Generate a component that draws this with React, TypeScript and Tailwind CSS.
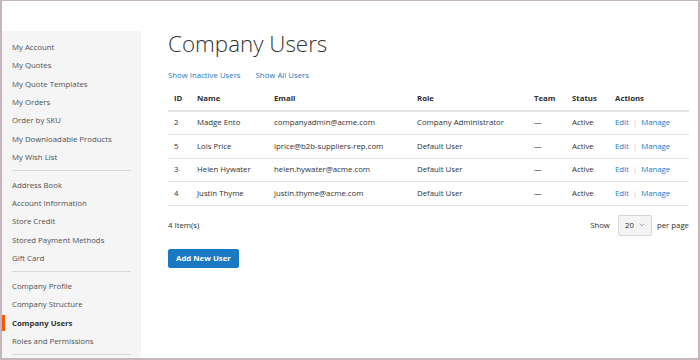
import { ChevronDown } from "lucide-react"

type User = {
    id: number
    name: string
    email: string
    role: string
}

const users: Array<User> = [
    { id: 2, name: "Madge Ento", email: "companyadmin@acme.com", role: "Company Administrator" },
    { id: 5, name: "Lois Price", email: "lprice@b2b-suppliers-rep.com", role: "Default User" },
    { id: 3, name: "Helen Hywater", email: "helen.hywater@acme.com", role: "Default User" },
    { id: 4, name: "Justin Thyme", email: "justin.thyme@acme.com", role: "Default User" },
]

const navGroups: Array<Array<string>> = [
    ["My Account", "My Quotes", "My Quote Templates", "My Orders", "Order by SKU", "My Downloadable Products", "My Wish List"],
    ["Address Book", "Account Information", "Store Credit", "Stored Payment Methods", "Gift Card"],
    ["Company Profile", "Company Structure", "Company Users", "Roles and Permissions"],
]

const Sidebar: React.FC = () => {
    return (
        <aside className="w-[139px] shrink-0 mt-[30px] bg-[#f5f5f5] pt-[7px]">
            {navGroups.map((group, gi) => (
                <div key={gi} className="border-b border-[#d6d6d6] mx-[10px] pb-[4px] mb-[4.5px]">
                    {group.map((item) => {
                        const active = item === "Company Users"
                        return (
                            <div key={item} className="relative h-[18.33px] leading-[18.33px] text-[7.8px] whitespace-nowrap">
                                {active && <span className="absolute -left-[10px] top-[1px] h-[16px] w-[3px] bg-[#ff5501]" />}
                                <span className={active ? "font-bold text-[#333333]" : "text-[#505050]"}>{item}</span>
                            </div>
                        )
                    })}
                </div>
            ))}
        </aside>
    )
}

const App: React.FC = () => {
    return (
        <div
            className="w-[700px] h-[360px] overflow-hidden bg-white border-t border-l-2 border-r-2 border-b-2 border-[#c4b6ba] text-[#303030]"
            style={{ fontFamily: '"Open Sans", "Liberation Sans", sans-serif' }}
        >
            <div className="flex">
                <Sidebar />
                <main className="flex-1 pl-[27px] pr-[9px]">
                    <h1 className="mt-[28px] text-[22.4px] font-light leading-[30px] text-[#333333]">Company Users</h1>
                    <div className="flex gap-[15px] mt-[9px] text-[7.8px] leading-[14px] text-[#1979c3]">
                        <span>Show Inactive Users</span>
                        <span>Show All Users</span>
                    </div>
                    <table className="w-full mt-[5px] text-[7.8px] border-collapse">
                        <thead>
                            <tr className="border-b-2 border-[#e4e4e4]">
                                <th className="w-[23px] text-left pl-[6px] h-[24px] font-bold">ID</th>
                                <th className="w-[77px] text-left pl-[6px] font-bold">Name</th>
                                <th className="w-[143px] text-left pl-[6px] font-bold">Email</th>
                                <th className="w-[117px] text-left pl-[6px] font-bold">Role</th>
                                <th className="w-[38px] text-left pl-[6px] font-bold">Team</th>
                                <th className="w-[43px] text-left pl-[6px] font-bold">Status</th>
                                <th className="text-left pl-[6px] font-bold">Actions</th>
                            </tr>
                        </thead>
                        <tbody>
                            {users.map((user) => (
                                <tr key={user.id} className="border-b border-[#e4e4e4] h-[23.6px]">
                                    <td className="pl-[6px]">{user.id}</td>
                                    <td className="pl-[6px] whitespace-nowrap">{user.name}</td>
                                    <td className="pl-[6px] whitespace-nowrap">{user.email}</td>
                                    <td className="pl-[6px] whitespace-nowrap">{user.role}</td>
                                    <td className="pl-[6px]">—</td>
                                    <td className="pl-[6px]">Active</td>
                                    <td className="pl-[6px] whitespace-nowrap text-[#1979c3]">
                                        Edit
                                        <span className="mx-[4px] text-[#c5c5c5]">|</span>
                                        Manage
                                    </td>
                                </tr>
                            ))}
                        </tbody>
                    </table>
                    <div className="flex items-center justify-between mt-[9px] text-[7.8px]">
                        <span>4 Item(s)</span>
                        <div className="flex items-center">
                            <span className="mr-[8px]">Show</span>
                            <div className="flex items-center justify-between w-[34px] h-[21px] pl-[6px] pr-[5px] bg-[#f4f4f4] border border-[#d6d6d6] rounded-[2px]">
                                <span>20</span>
                                <ChevronDown size={8} strokeWidth={1.5} className="text-[#555555]" />
                            </div>
                            <span className="ml-[5px]">per page</span>
                        </div>
                    </div>
                    <button className="mt-[13px] h-[19px] px-[7px] bg-[#1979c3] text-white text-[7.8px] font-bold rounded-[2px] border border-[#1979c3]">
                        Add New User
                    </button>
                </main>
            </div>
        </div>
    )
}

export default App
